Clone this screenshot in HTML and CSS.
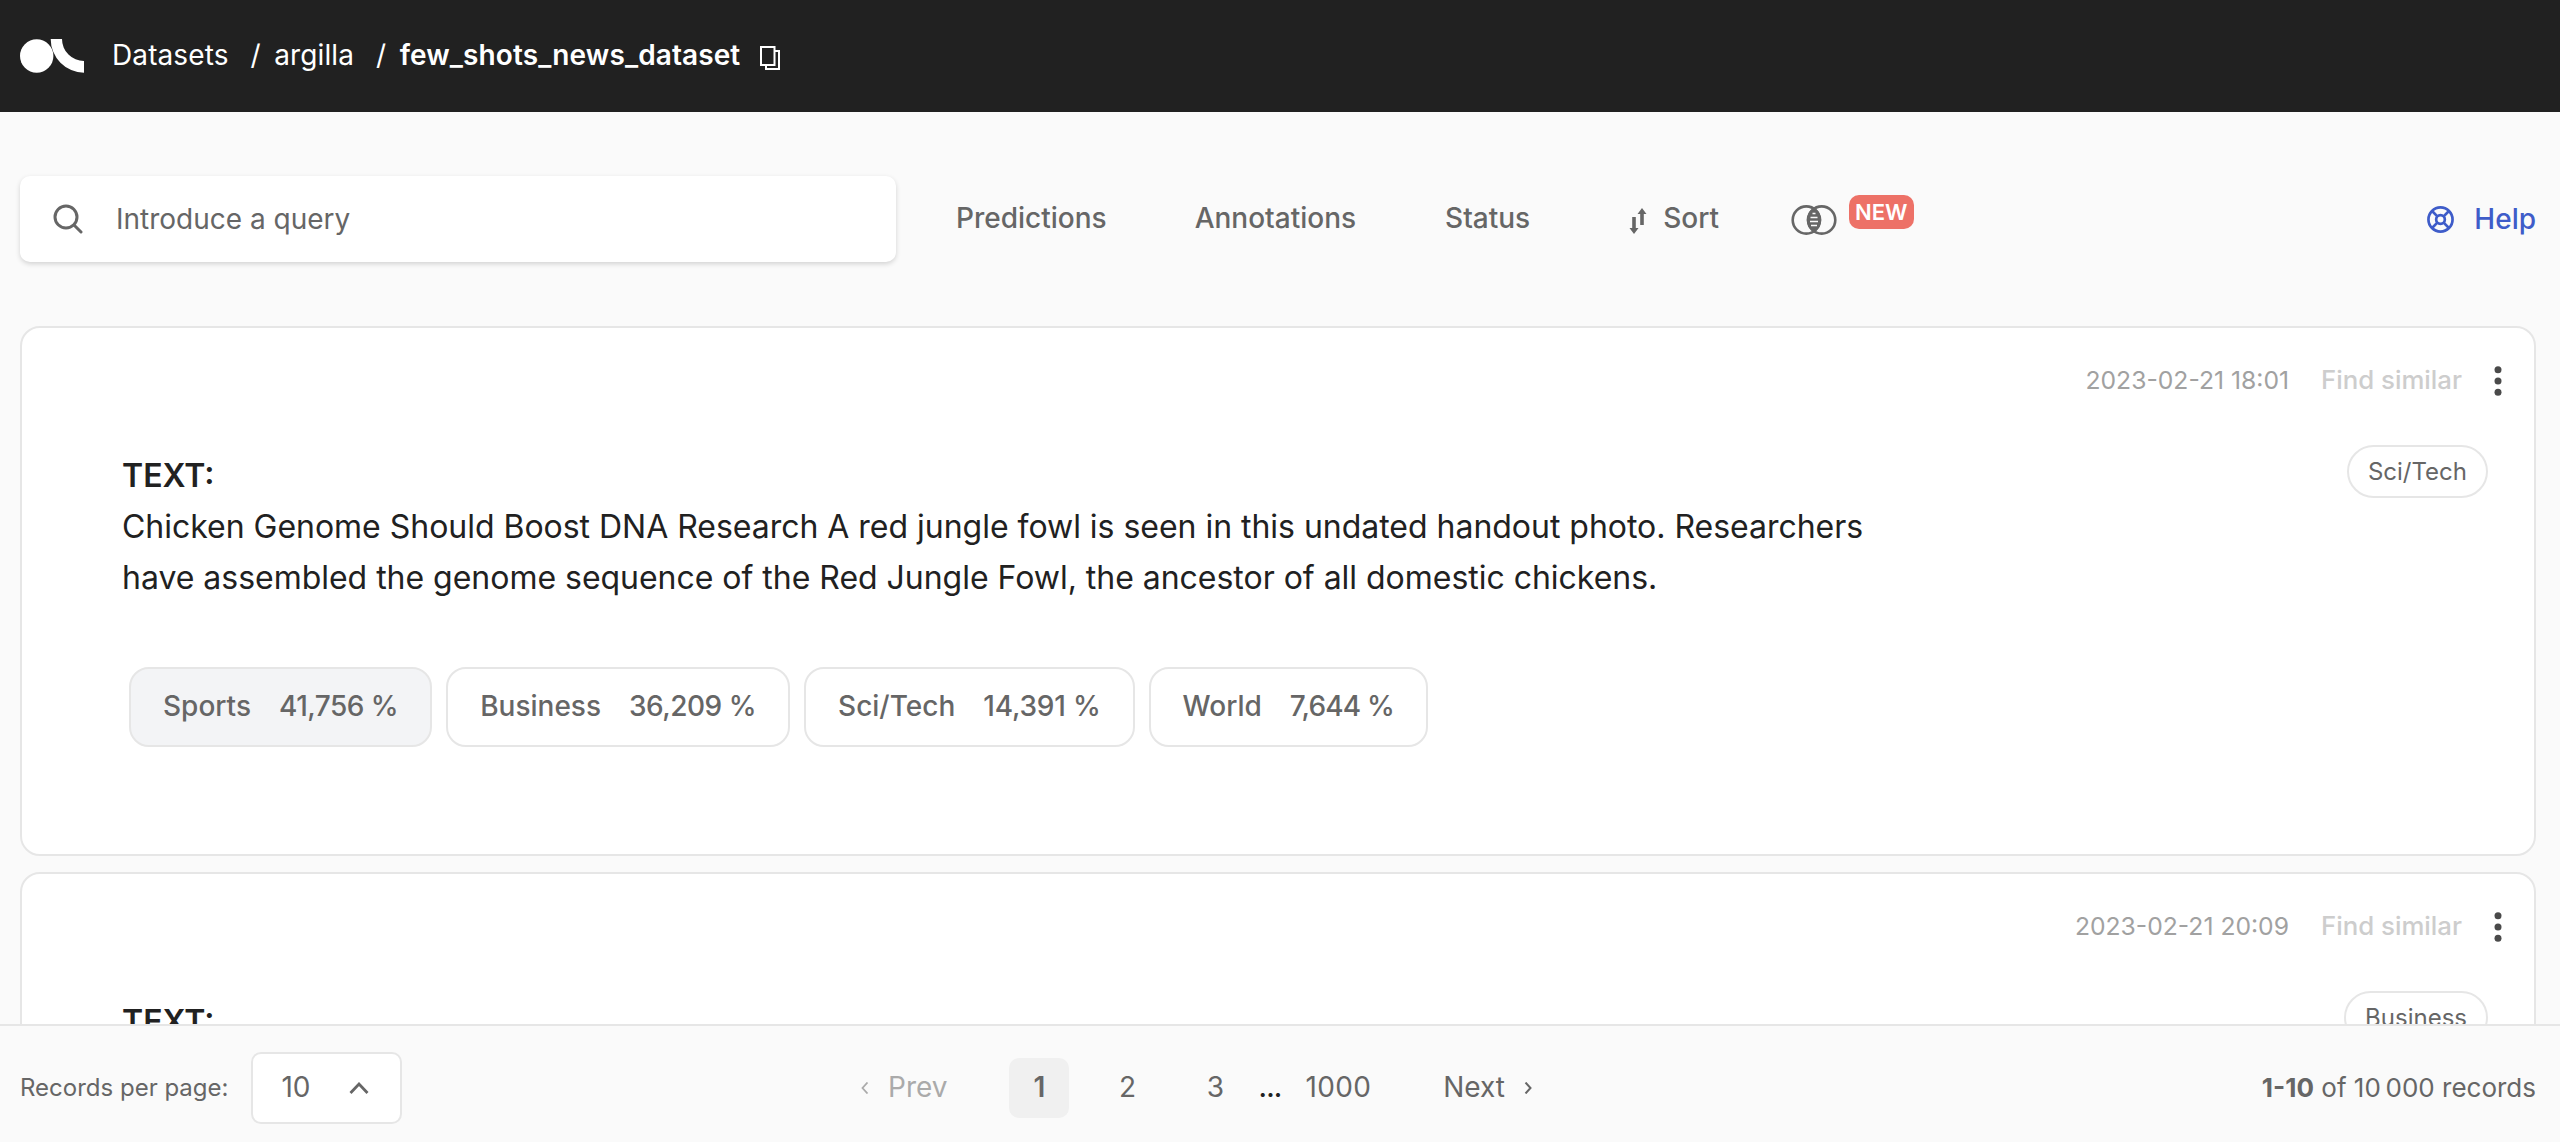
FILE: index.html
```html
<!DOCTYPE html>
<html lang="en">
<head>
<meta charset="utf-8">
<title>few_shots_news_dataset</title>
<link rel="stylesheet" href="styles.css">
</head>
<body>
<header class="topbar">
  <svg class="logo" viewBox="0 0 64 34" width="64" height="34" fill="#fff"><circle cx="16.700" cy="17" r="16.700"/><path d="M30.700 0H42A22 22 0 0 0 64 22V33.700A33.500 33.700 0 0 1 30.700 0Z"/></svg>
  <nav class="crumbs">
    <a class="crumb">Datasets</a><span class="slash">/</span><a class="crumb">argilla</a><span class="slash">/</span><a class="crumb current">few_shots_news_dataset</a>
  </nav>
  <svg class="copy" viewBox="0 0 20 24" width="20" height="24" fill="none" stroke="#fff" stroke-width="2"><path d="M1 1H14.500V19H1Z"/><path d="M15 5H19V23H6V19"/></svg>
</header>
<main class="page">
  <div class="toolbar">
    <div class="search">
      <svg viewBox="0 0 30 30" width="30" height="30" fill="none" stroke="#666" stroke-width="3" stroke-linecap="round"><circle cx="13" cy="13" r="11"/><path d="M21 21L28 28"/></svg>
      <span>Introduce a query</span>
    </div>
    <div class="filters">
      <span class="f-pred">Predictions</span>
      <span class="f-ann">Annotations</span>
      <span class="f-stat">Status</span>
      <svg class="sort" viewBox="0 0 18 26" width="18" height="26" fill="none" stroke="#666" stroke-width="3.600"><path d="M5 9V21M13 5V17"/><path d="M0.500 20H9.500L5 26ZM8.500 6H17.500L13 0Z" fill="#666" stroke="none"/></svg>
      <span>Sort</span>
      <svg class="similar" viewBox="0 0 46 30" width="46" height="30" fill="none" stroke="#666" stroke-width="2.600"><path d="M23 4C15 10 15 20 23 26C31 20 31 10 23 4Z" fill="#666"/><circle cx="15.300" cy="15" r="13.600"/><circle cx="30.700" cy="15" r="13.600"/><path d="M21.500 8.500H24.500M19.500 12.500H26.500M19 16.500H27M20 20.500H26" stroke="#fafafa" stroke-width="1.500"/></svg>
      <span class="new">NEW</span>
    </div>
    <div class="help">
      <svg viewBox="0 0 28 28" width="27" height="27" fill="none" stroke="#3e5cc9" stroke-width="2.800"><circle cx="14" cy="14" r="12.500"/><circle cx="14" cy="14" r="4.500"/><path d="M5.500 5.500L11 11M22.500 5.500L17 11M5.500 22.500L11 17M22.500 22.500L17 17"/></svg>
      <span>Help</span>
    </div>
  </div>
  <section class="records">
    <article class="card">
      <div class="meta"><span class="date">2023-02-21 18:01</span><span class="find">Find similar</span><svg class="dots" viewBox="0 0 8 30" width="8" height="30" fill="#4a4a4a"><circle cx="4" cy="3.800" r="3.500"/><circle cx="4" cy="15" r="3.500"/><circle cx="4" cy="26.200" r="3.500"/></svg></div>
      <div class="body">
        <div class="content">
          <h2>TEXT:</h2>
          <p>Chicken Genome Should Boost DNA Research A red jungle fowl is seen in this undated handout photo. Researchers<br>have assembled the genome sequence of the Red Jungle Fowl, the ancestor of all domestic chickens.</p>
          <div class="chips">
            <div class="chip active"><span>Sports</span><span class="score">41,756 %</span></div>
            <div class="chip"><span>Business</span><span class="score">36,209 %</span></div>
            <div class="chip"><span>Sci/Tech</span><span class="score">14,391 %</span></div>
            <div class="chip"><span>World</span><span class="score">7,644 %</span></div>
          </div>
        </div>
        <span class="tag">Sci/Tech</span>
      </div>
    </article>
    <article class="card">
      <div class="meta"><span class="date">2023-02-21 20:09</span><span class="find">Find similar</span><svg class="dots" viewBox="0 0 8 30" width="8" height="30" fill="#4a4a4a"><circle cx="4" cy="3.800" r="3.500"/><circle cx="4" cy="15" r="3.500"/><circle cx="4" cy="26.200" r="3.500"/></svg></div>
      <div class="body">
        <div class="content"><h2>TEXT:</h2></div>
        <span class="tag">Business</span>
      </div>
    </article>
  </section>
</main>
<footer class="pager">
  <div class="perpage">
    <span>Records per page:</span>
    <div class="select"><span>10</span><svg viewBox="0 0 20 12" width="20" height="12" fill="none" stroke="#666" stroke-width="2.800"><path d="M1.500 11L10 2L18.500 11"/></svg></div>
  </div>
  <div class="pages">
    <svg class="prev-arrow" viewBox="0 0 8 12" width="8" height="12" fill="none" stroke="#aaa" stroke-width="1.800"><path d="M6.500 0.500L1.500 6L6.500 11.500"/></svg>
    <span class="prev">Prev</span>
    <span class="num on">1</span><span class="num">2</span><span class="num">3</span><span class="ell">...</span><span class="last">1000</span>
    <span class="next">Next</span>
    <svg class="next-arrow" viewBox="0 0 8 12" width="8" height="12" fill="none" stroke="#666" stroke-width="2"><path d="M1.500 0.500L6.500 6L1.500 11.500"/></svg>
  </div>
  <div class="total"><b>1-10</b> of 10&#8201;000 records</div>
</footer>
</body>
</html>
```
FILE: styles.css
```css
* { box-sizing: border-box; }
body {
  margin: 0;
  height: 1142px;
  overflow: hidden;
  display: flex;
  flex-direction: column;
  background: #fafafa;
  color: #666;
  font: 400 28px/34px Inter, "Liberation Sans", sans-serif;
}
svg { display: block; flex: none; }
span, a { white-space: nowrap; }

.topbar {
  flex: none;
  height: 112px;
  padding-left: 20px;
  display: flex;
  align-items: center;
  background: #212121;
  color: #fff;
}
.crumbs { display: flex; margin-left: 28px; padding-bottom: 2px; letter-spacing: .1px; }
.slash { margin: 0 13.5px 0 22px; }
.current { font-weight: 600; }
.copy { margin: 4px 0 0 20px; }

.page { flex: 1; min-height: 0; padding: 64px 24px 0 20px; overflow: hidden; }
.toolbar { height: 86px; display: flex; align-items: center; }
.search {
  width: 876px;
  height: 86px;
  padding-left: 33px;
  display: flex;
  align-items: center;
  gap: 33px;
  border-radius: 10px;
  background: #fff;
  box-shadow: 0 2px 5px rgba(0, 0, 0, .16);
}
.filters { display: flex; align-items: center; margin-left: 60px; padding-bottom: 2px; font-weight: 500; }
.f-ann { margin-left: 88px; }
.f-stat { margin-left: 89px; }
.sort { margin: 5px 16px 0 99px; }
.similar { margin: 3px 12px 0 72px; }
.new {
  height: 34px;
  margin-bottom: 12px;
  padding: 0 6px;
  border-radius: 10px;
  background: #ed7167;
  color: #fff;
  font: 600 22px/34px Inter, "Liberation Sans", sans-serif;
}
.help { margin-left: auto; display: flex; align-items: center; gap: 20px; color: #3e5cc9; font-weight: 500; }

.records { display: grid; gap: 16px; margin-top: 64px; }
.card {
  height: 530px;
  padding: 36px 32px 0 100px;
  border: 2px solid #e6e6e6;
  border-radius: 20px;
  background: #fff;
}
.meta { height: 34px; display: flex; align-items: center; justify-content: flex-end; }
.date { padding-bottom: 2px; font-size: 24.7px; color: #a1a1a1; }
.find { margin-left: 32px; padding-bottom: 2px; font-size: 25.8px; font-weight: 500; color: #cdcdcd; }
.dots { margin-left: 32px; }
.body { display: flex; justify-content: space-between; align-items: flex-start; margin-top: 47px; }
.content { margin-top: 5px; color: #212121; }
h2 { margin: 0; font-size: 32px; font-weight: 600; line-height: 51.2px; }
p { margin: 0; font-size: 32px; line-height: 51.2px; letter-spacing: -.022px; white-space: nowrap; }
.tag {
  height: 53px;
  margin-right: 14px;
  padding: 0 19px;
  border: 2px solid #e6e6e6;
  border-radius: 27px;
  font-size: 24px;
  line-height: 49px;
}
.chips { display: flex; gap: 14px; margin: 63.4px 0 0 7px; color: #666; font-weight: 500; }
.chip {
  height: 80px;
  padding: 0 32px 2px;
  display: flex;
  align-items: center;
  gap: 28px;
  border: 2px solid #e6e6e6;
  border-radius: 20px;
}
.score { letter-spacing: -.5px; }
.chip:nth-child(3) .score { letter-spacing: -.2px; }
.chip:nth-child(4) .score { letter-spacing: -.8px; }
.active { background: #f3f4f6; }

.pager {
  flex: none;
  height: 118px;
  padding: 8px 24px 0 20px;
  display: grid;
  grid-template-columns: 841px 1fr auto;
  align-items: center;
  border-top: 2px solid #e6e6e6;
  background: #fafafa;
}
.perpage { display: flex; align-items: center; gap: 23px; font-size: 24px; }
.select {
  width: 151px;
  height: 72px;
  padding: 0 31px 0 28px;
  display: flex;
  align-items: center;
  justify-content: space-between;
  border: 2px solid #e6e6e6;
  border-radius: 10px;
  background: #fff;
  font-size: 28px;
}
.select span { padding-bottom: 2px; }
.pages { display: flex; align-items: center; }
.prev { margin: 0 62px 0 19px; padding-bottom: 2px; color: #aaa; }
.num { width: 60px; height: 60px; margin-right: 28px; border-radius: 10px; text-align: center; line-height: 58px; }
.on { background: #f0f0f0; font-weight: 600; }
.ell { margin-left: -15px; padding-bottom: 2px; letter-spacing: -.8px; color: #212121; font-weight: 500; }
.last { margin-left: 24px; padding-bottom: 2px; letter-spacing: .3px; }
.next { margin: 0 19px 0 72px; padding-bottom: 2px; }
.total { font-size: 26px; white-space: nowrap; }
```
